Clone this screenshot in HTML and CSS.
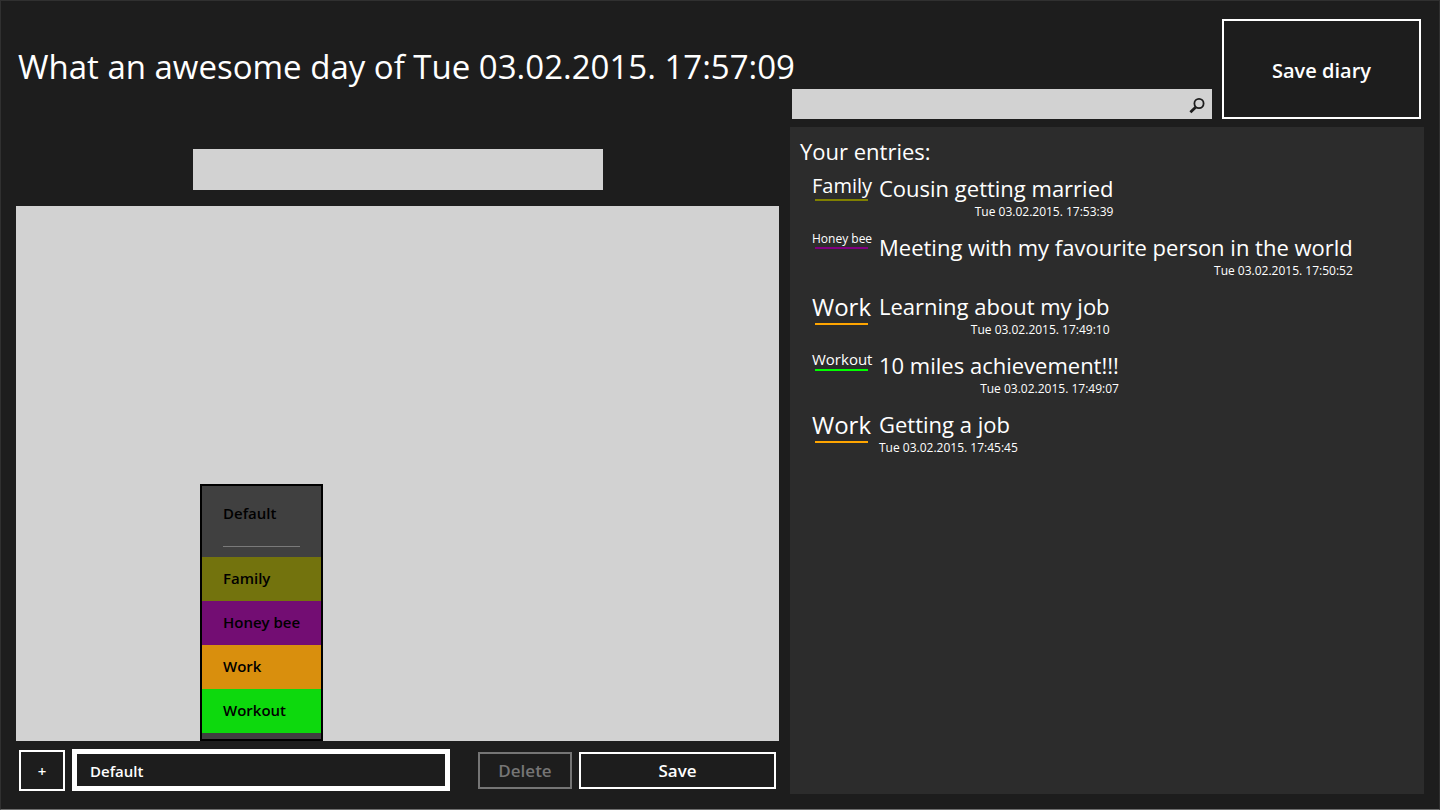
FILE: index.html
```html
<!DOCTYPE html>
<html lang="en">
  <head>
    <meta charset="UTF-8" />
    <title>Diary</title>
    <meta name="viewport" content="width=device-width, initial-scale=1" />
    <link rel="stylesheet" href="styles.css">
  </head>
  <body>
    <main class="page">
      <section class="editor">
        <h1>What an awesome day of Tue 03.02.2015. 17:57:09</h1>
        <input type="text" class="entry-title" aria-label="Entry title" />
        <div class="entry-body">
          <textarea aria-label="Entry text"></textarea>

          <!-- Category menu, opens above the category box -->
          <ul class="category-menu">
            <li><button type="button">Default</button></li>
            <li class="separator"></li>
            <li><button type="button" class="family">Family</button></li>
            <li><button type="button" class="honey">Honey bee</button></li>
            <li><button type="button" class="work">Work</button></li>
            <li><button type="button" class="workout">Workout</button></li>
          </ul>
        </div>
        <div class="toolbar">
          <button type="button" class="add" aria-label="Add category">+</button>
          <select class="category" aria-label="Category">
            <option>Default</option>
          </select>
          <button type="button" class="delete" disabled>Delete</button>
          <button type="button" class="save">Save</button>
        </div>
      </section>

      <section class="diary">
        <header>
          <form class="search">
            <input type="text" aria-label="Search entries" />
            <button type="submit" aria-label="Search">
              <svg width="18" height="18" viewBox="0 0 18 18" fill="none" stroke="#1d1d1d">
                <circle cx="11" cy="6.5" r="4.6" stroke-width="1.8" />
                <path d="M7.6 10.2 L2.4 15.2" stroke-width="2.8" />
              </svg>
            </button>
          </form>
          <button type="button" class="save-diary">Save diary</button>
        </header>

        <div class="entries">
          <h2>Your entries:</h2>
          <ul>
            <li>
              <span class="tag tag-family">Family</span>
              <div class="entry">
                <h3>Cousin getting married</h3>
                <time>Tue 03.02.2015. 17:53:39</time>
              </div>
            </li>
            <li>
              <span class="tag tag-honey">Honey bee</span>
              <div class="entry">
                <h3>Meeting with my favourite person in the world</h3>
                <time>Tue 03.02.2015. 17:50:52</time>
              </div>
            </li>
            <li>
              <span class="tag tag-work">Work</span>
              <div class="entry">
                <h3>Learning about my job</h3>
                <time>Tue 03.02.2015. 17:49:10</time>
              </div>
            </li>
            <li>
              <span class="tag tag-workout">Workout</span>
              <div class="entry">
                <h3>10 miles achievement!!!</h3>
                <time>Tue 03.02.2015. 17:49:07</time>
              </div>
            </li>
            <li>
              <span class="tag tag-work">Work</span>
              <div class="entry">
                <h3>Getting a job</h3>
                <time>Tue 03.02.2015. 17:45:45</time>
              </div>
            </li>
          </ul>
        </div>
      </section>
    </main>
  </body>
</html>
```
FILE: styles.css
```css
* {
  box-sizing: border-box;
}
body {
  margin: 0;
  background: #1d1d1d;
  color: #fff;
  font-family: "Open Sans", "Noto Sans", sans-serif;
}
h1,
h2,
h3 {
  margin: 0;
  font-weight: 400;
  white-space: nowrap;
}
ul {
  margin: 0;
  padding: 0;
  list-style: none;
}
button,
input,
select,
textarea {
  margin: 0;
  padding: 0;
  border: none;
  border-radius: 0;
  font-family: inherit;
}
button {
  background: #1d1d1d;
  color: #fff;
  font-weight: 600;
}
input,
textarea {
  background: #d2d2d2;
  color: #000;
}
.page {
  display: grid;
  grid-template-columns: 763fr 634fr;
  gap: 11px;
  min-height: 100vh;
  padding: 18px 15px 15px;
  border: 1px solid #303030;
  border-bottom-color: #6e6e6e;
}

/* Editor */
.editor {
  display: flex;
  flex-direction: column;
  min-width: 0;
}
h1 {
  padding: 24px 0 34px 2px;
  font-size: 33px;
  line-height: 48px;
}
.entry-title {
  align-self: center;
  width: 100%;
  max-width: 410px;
  height: 41px;
  margin: 24px 0 16px;
  padding: 0 10px;
  font-size: 20px;
}
.entry-body {
  position: relative;
  display: flex;
  flex: 1;
}
textarea {
  flex: 1;
  padding: 10px;
  font-size: 16px;
  resize: none;
}
.category-menu {
  position: absolute;
  left: 184px;
  bottom: 0;
  padding: 6px 0;
  border: 2px solid #000;
  background: #404040;
}
.category-menu button {
  display: block;
  width: 100%;
  height: 44px;
  padding: 0 21px 2px;
  background: #404040;
  color: #000;
  font-size: 15px;
  text-align: left;
}
.category-menu .family {
  background: #73730d;
}
.category-menu .honey {
  background: #730d73;
}
.category-menu .work {
  background: #d98f0d;
}
.category-menu .workout {
  background: #0dd90d;
}
.separator {
  height: 1px;
  margin: 10px 21px;
  background: #7a7a7a;
}
.toolbar {
  display: flex;
  align-items: center;
  gap: 7px;
  padding: 8px 3px 3px;
}
.toolbar button {
  height: 37px;
  border: 2px solid #fff;
  font-size: 17px;
}
.toolbar .add {
  width: 46px;
  height: 41px;
  padding-top: 2px;
  font-size: 15px;
}
.category {
  flex: 378 1 378px;
  height: 42px;
  padding: 1px 13px 0;
  border: 5px solid #fff;
  background: #1d1d1d;
  color: #fff;
  font-size: 15px;
  font-weight: 600;
  appearance: none;
}
.toolbar .delete {
  flex: 94 1 94px;
  margin-left: 21px;
  border-color: #757575;
  color: #757575;
}
.toolbar .save {
  flex: 197 1 197px;
}

/* Saved entries */
.diary {
  display: flex;
  flex-direction: column;
  gap: 8px;
  min-width: 0;
}
header {
  display: flex;
  align-items: flex-end;
  gap: 10px;
  padding: 0 3px 0 2px;
}
.search {
  display: flex;
  flex: 1;
  height: 30px;
  background: #d2d2d2;
}
.search input {
  flex: 1;
  min-width: 0;
  padding: 0 8px;
  font-size: 15px;
}
.search button {
  display: flex;
  align-items: center;
  justify-content: center;
  width: 30px;
  padding-top: 3px;
  background: #d2d2d2;
}
.save-diary {
  width: 199px;
  height: 100px;
  padding-top: 2px;
  border: 2px solid #fff;
  font-size: 20px;
}
.entries {
  flex: 1;
  padding: 8px 10px;
  background: #2c2c2c;
}
h2 {
  font-size: 22px;
  line-height: 32px;
}
.entries ul {
  display: flex;
  flex-direction: column;
  gap: 11px;
  padding: 5px 12px;
}
.entries li {
  display: flex;
  align-items: flex-start;
  gap: 8px;
}
.tag {
  width: 59px;
  text-align: center;
  white-space: nowrap;
}
.tag::after {
  content: "";
  display: block;
  height: 2px;
  margin: 0 3px;
}
.tag-family {
  font-size: 20px;
  line-height: 27px;
}
.tag-honey {
  font-size: 12px;
  line-height: 16px;
}
.tag-work {
  font-size: 24px;
  line-height: 33px;
}
.tag-workout {
  font-size: 15px;
  line-height: 20px;
}
.tag-family::after {
  background: #808000;
}
.tag-honey::after {
  background: #800080;
}
.tag-work::after {
  background: #ffa500;
}
.tag-workout::after {
  background: #00ff00;
}
.entry {
  display: flex;
  flex-direction: column;
}
h3 {
  font-size: 22px;
  line-height: 32px;
}
time {
  font-size: 12px;
  line-height: 16px;
  text-align: right;
}
```
